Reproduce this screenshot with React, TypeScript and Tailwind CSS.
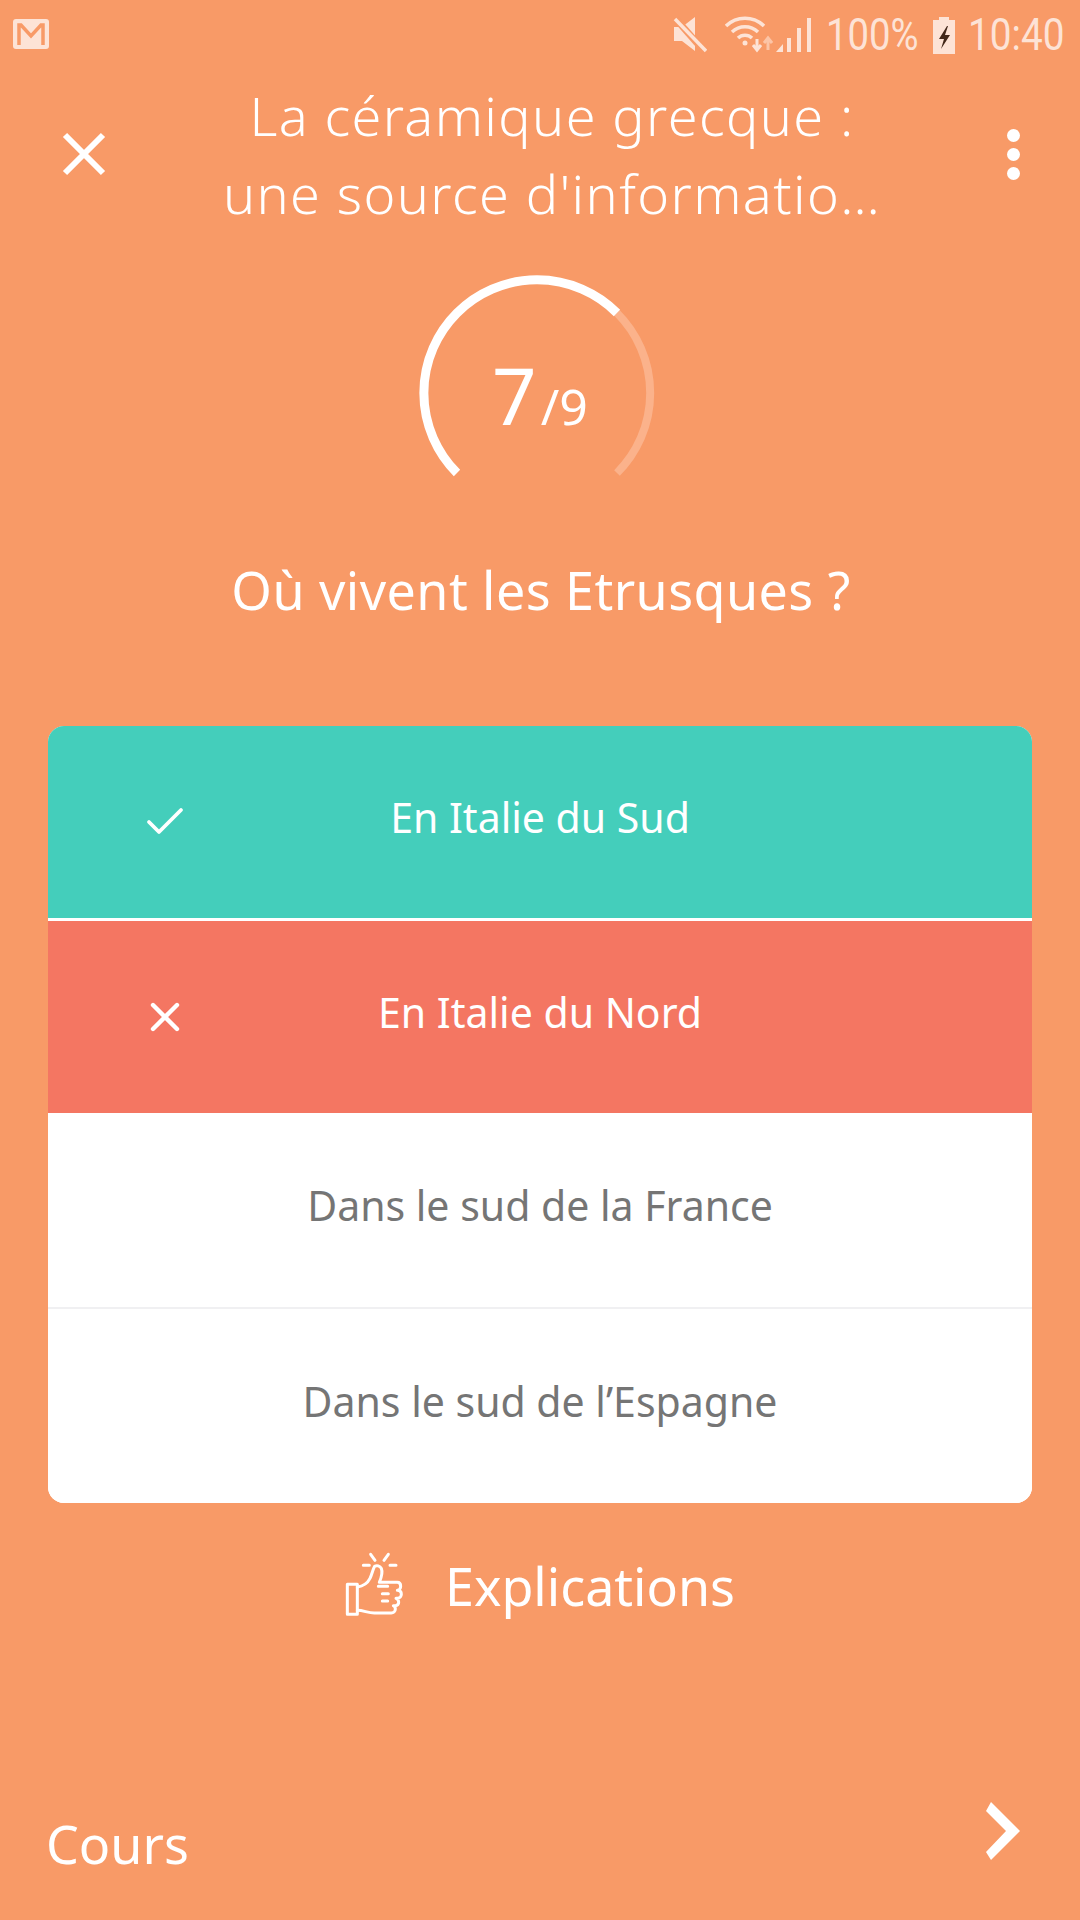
import React from 'react';
import { Check, X } from 'lucide-react';

const FONT = 'font-["Noto_Sans","Lato",sans-serif]';

const StatusBar: React.FC = () => (
  <div className="h-[70px] flex items-center justify-between pl-[13px] pr-[15px] text-[#fde3d6]">
    {/* mail notification */}
    <svg width="36" height="32" viewBox="0 0 36 32" className="mt-[-2px]">
      <rect x="0" y="1" width="36" height="30" rx="3" fill="#fde3d6" />
      <path d="M6 27V7h2l10 11L28 7h2v20" fill="none" stroke="#f89a67" strokeWidth="3.5" />
    </svg>
    <div className="flex items-center font-['Roboto',sans-serif]">
      {/* muted speaker */}
      <svg width="34" height="38" viewBox="0 0 34 38" className="mr-[18px]">
        <path d="M1 11h8L22 1v34L9 25H1z" fill="#fde3d6" />
        <path d="M2 2l30 34" stroke="#f89a67" strokeWidth="7" />
        <path d="M2 3l31 32" stroke="#fde3d6" strokeWidth="3.5" />
      </svg>
      {/* wifi with transfer arrows */}
      <svg width="48" height="38" viewBox="0 0 48 38" className="mr-[3px]">
        <g fill="none" stroke="#fde3d6" strokeWidth="3.5">
          <path d="M1 10a27 27 0 0 1 38 0" />
          <path d="M7 16a19 19 0 0 1 26 0" />
          <path d="M13 22a10 10 0 0 1 14 0" />
        </g>
        <circle cx="20" cy="27" r="2.5" fill="#fde3d6" />
        <path d="M32 23v10M28 29l4 5 4-5" fill="none" stroke="#fde3d6" strokeWidth="3" />
        <path d="M43 34V23M39 27l4-5 4 5" fill="none" stroke="#fcc4a6" strokeWidth="3" />
      </svg>
      {/* signal bars */}
      <svg width="36" height="38" viewBox="0 0 36 38" className="mr-[14px]">
        <path d="M0 36l7-8v8z" fill="#fde3d6" />
        <rect x="11" y="22" width="4" height="14" fill="#fde3d6" />
        <rect x="21" y="12" width="4" height="24" fill="#fde3d6" />
        <rect x="31" y="2" width="4" height="34" fill="#fde3d6" />
      </svg>
      <span className="text-[44px] leading-none w-[94px] scale-x-[0.87] origin-left whitespace-nowrap">100%</span>
      {/* charging battery */}
      <svg width="24" height="38" viewBox="0 0 24 38" className="mx-[12px]">
        <path d="M7 1h10v3h6v34H1V4h6z" fill="#fde3d6" />
        <path d="M15 10l-8 13h5l-3 10 9-14h-5l3-9z" fill="#43281a" />
      </svg>
      <span className="text-[44px] leading-none w-[97px] scale-x-[0.88] origin-left whitespace-nowrap">10:40</span>
    </div>
  </div>
);

const Header: React.FC = () => (
  <div className="flex items-center pl-[62px] pr-[58px] mt-[6px]">
    <svg width="44" height="44" viewBox="0 0 44 44" className="shrink-0">
      <path d="M3 3l38 38M41 3L3 41" stroke="#fff" strokeWidth="6" fill="none" />
    </svg>
    <div className="flex-1 text-center text-white font-light text-[54px] tracking-[1.4px] leading-[78px] whitespace-nowrap">
      <div>La céramique grecque :</div>
      <div>une source d'informatio…</div>
    </div>
    <div className="w-[24px] flex flex-col items-end gap-[6px]">
      <span className="w-[13px] h-[13px] rounded-full bg-white mr-[2px]" />
      <span className="w-[13px] h-[13px] rounded-full bg-white mr-[2px]" />
      <span className="w-[13px] h-[13px] rounded-full bg-white mr-[2px]" />
    </div>
  </div>
);

const ProgressRing: React.FC = () => (
  <div className="flex justify-center pr-[6px] mt-[45px]">
    <div className="relative w-[236px] h-[199px]">
      <svg width="236" height="199" viewBox="0 0 236 199" fill="none" className="overflow-visible">
        <path d="M198 36A113 113 0 0 1 198 196" stroke="#fbb28b" strokeWidth="8" />
        <path d="M38 196A113 113 0 0 1 198 36" stroke="#fff" strokeWidth="9" />
      </svg>
      <div className="absolute inset-0 flex items-baseline justify-center text-white pt-[79px] pl-[6px] leading-none">
        <span className="text-[78px] leading-none">7</span>
        <span className="text-[50px] leading-none ml-[4px]">/9</span>
      </div>
    </div>
  </div>
);

const Answer: React.FC<{
  label: string;
  tone: 'right' | 'wrong' | 'plain';
  className?: string;
}> = ({ label, tone, className }) => {
  const toneClasses = {
    right: 'bg-[#44cebb] text-white',
    wrong: 'bg-[#f47662] text-white',
    plain: 'bg-white text-[#757575]',
  };

  return (
    <div className={`relative flex items-center justify-center text-[41px] leading-none ${toneClasses[tone]} ${className ?? ''}`}>
      {tone === 'right' && (
        <Check className="absolute left-[93px] top-[72px] w-[48px] h-[48px]" strokeWidth={1.9} />
      )}
      {tone === 'wrong' && (
        <X className="absolute left-[93px] top-[72px] w-[48px] h-[48px]" strokeWidth={2.2} />
      )}
      <span className="mt-[-10px]">{label}</span>
    </div>
  );
};

const ThumbsUp: React.FC = () => (
  <svg width="60" height="65" viewBox="0 0 180 195" fill="none" stroke="#fff" strokeWidth="9" strokeLinejoin="round" strokeLinecap="round" className="mt-[-6px]">
    <path d="M7 100h30v90H7z" />
    <path d="M37 108c14-2 30-10 38-26 6-12 8-26 14-36 6-4 16-2 20 6 4 10 0 28-6 42h54c8 0 10 6 10 12s-4 12-10 12c10 0 12 6 12 12s-4 12-12 12h-4c6 2 8 6 8 12s-4 10-10 10h-6c4 2 6 6 6 10 0 8-6 12-12 12H88c-20 0-32-8-51-8" />
    <path d="M128 106H100M130 128H112M128 150H112" />
    <path d="M77 10l13 18M130 10l-13 18M55 43h18M135 43h18" />
  </svg>
);

const App: React.FC = () => (
  <div className={`w-[1080px] h-[1920px] bg-[#f89a67] flex flex-col overflow-hidden ${FONT}`}>
    <StatusBar />
    <Header />
    <ProgressRing />

    <h1 className="text-center text-white text-[52px] tracking-[0.45px] leading-[60px] mt-[84px] pl-[2px]">Où vivent les Etrusques ?</h1>

    <div className="mx-[48px] mt-[106px] rounded-[16px] overflow-hidden bg-white flex flex-col">
      <Answer label="En Italie du Sud" tone="right" className="h-[192px]" />
      <Answer label="En Italie du Nord" tone="wrong" className="h-[192px] mt-[3px]" />
      <Answer label="Dans le sud de la France" tone="plain" className="h-[196px] border-b-2 border-[#f0f0f2]" />
      <Answer label="Dans le sud de l’Espagne" tone="plain" className="h-[194px]" />
    </div>

    <div className="flex items-center justify-center gap-[40px] mt-[47px] text-white text-[52px] leading-[72px]">
      <ThumbsUp />
      <span>Explications</span>
    </div>

    <div className="flex items-center justify-between pl-[46px] pr-[60px] mt-[auto] pb-[34px] text-white">
      <span className="text-[52px] leading-none">Cours</span>
      <svg width="34" height="58" viewBox="0 0 34 58" className="mb-[26px]">
        <path d="M5 0l29 29L5 58 0 50l20-21L0 9z" fill="#fff" />
      </svg>
    </div>
  </div>
);

export default App;
